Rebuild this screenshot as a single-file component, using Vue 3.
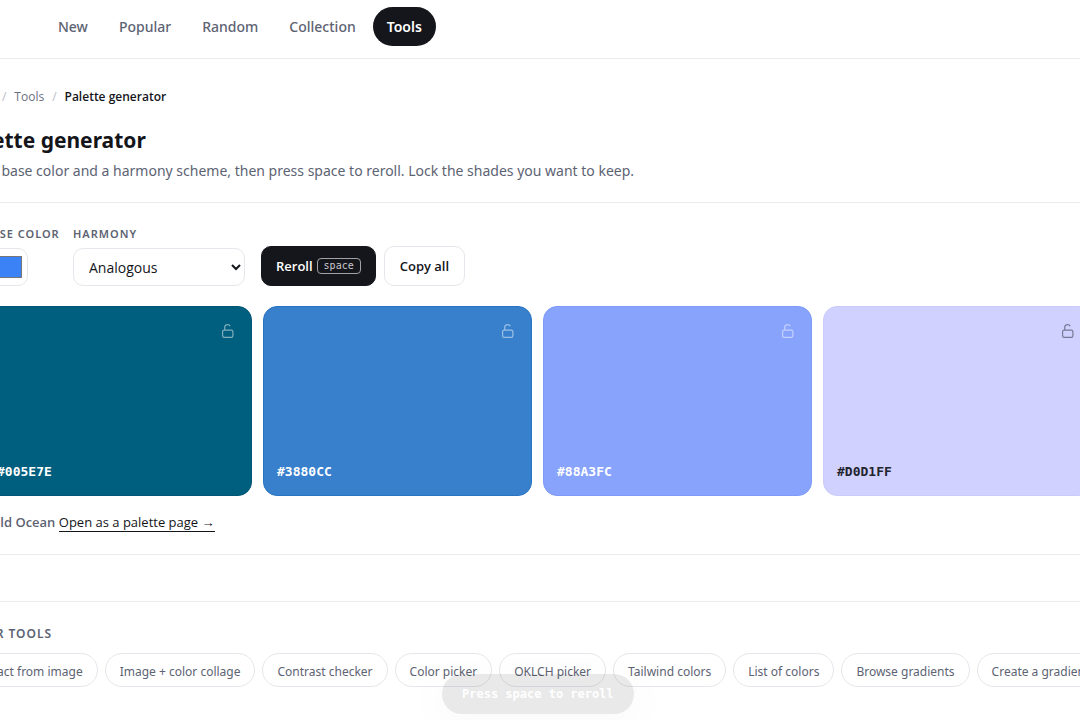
<script setup>
import { ref } from 'vue'

const nav = ['New', 'Popular', 'Random', 'Collection', 'Tools']
const base = ref('#3b82f6')
const harmony = ref('Analogous')
const schemes = ['Analogous', 'Complementary', 'Triadic', 'Monochrome']
const shades = [
  { hex: '#005E7E', edge: '#005675' },
  { hex: '#3880CC', edge: '#2874c4' },
  { hex: '#88A3FC', edge: '#7f9af8' },
  { hex: '#D0D1FF', edge: '#cacbfb', dark: true },
  { hex: '#F3EFFF', edge: '#e9e4fa', dark: true },
]
const tools = [
  'Extract from image', 'Image + color collage', 'Contrast checker', 'Color picker',
  'OKLCH picker', 'Tailwind colors', 'List of colors', 'Browse gradients', 'Create a gradient',
]
</script>

<template>
  <div class="viewport">
    <div class="shell">
      <header class="topbar">
        <nav class="nav" aria-label="Main">
          <a v-for="n in nav" :key="n" href="#" :class="{ active: n === 'Tools' }">{{ n }}</a>
        </nav>
      </header>
      <main>
        <section class="intro">
          <nav class="crumbs" aria-label="Breadcrumb">
            <a href="#">Home</a><i>/</i><a href="#">Tools</a><i>/</i><b>Palette generator</b>
          </nav>
          <h1>Palette generator</h1>
          <p>Pick a base color and a harmony scheme, then press space to reroll. Lock the shades you want to keep.</p>
        </section>
        <section class="generator">
          <div class="controls">
            <div class="field">
              <label for="base">Base color</label>
              <input id="base" v-model="base" type="color" />
            </div>
            <div class="field">
              <label for="harmony">Harmony</label>
              <select id="harmony" v-model="harmony">
                <option v-for="s in schemes" :key="s">{{ s }}</option>
              </select>
            </div>
            <div class="actions">
              <button class="reroll" type="button">Reroll <kbd>space</kbd></button>
              <button type="button">Copy all</button>
            </div>
          </div>
          <div class="shades">
            <article v-for="s in shades" :key="s.hex" class="shade" :class="{ dark: s.dark }" :style="{ background: s.hex, borderColor: s.edge }">
              <button class="lock" type="button" :aria-label="'Lock ' + s.hex">
                <svg viewBox="0 0 14 16" width="14" height="16" fill="none" stroke="currentColor" stroke-width="1.2">
                  <rect x="1.6" y="7.1" width="10.3" height="7.3" rx="1.6" />
                  <path d="M3.7 7V4.5C3.7 2.8 5 1.6 6.6 1.6c1.2 0 2.2.7 2.6 1.7" />
                </svg>
              </button>
              <span class="hex">{{ s.hex }}</span>
            </article>
          </div>
          <p class="name"><b>Emerald Ocean</b> <a href="#">Open as a palette page →</a></p>
        </section>
        <section class="more">
          <h2>Other tools</h2>
          <div class="chips">
            <a v-for="t in tools" :key="t" href="#">{{ t }}</a>
          </div>
        </section>
      </main>
    </div>
    <div class="toast" role="status">Press space to reroll</div>
  </div>
</template>

<style>
body { margin: 0; background: #fff; }
</style>

<style scoped>
.viewport {
  position: relative;
  min-height: 100vh;
  overflow: hidden;
  font-family: "Noto Sans", "Open Sans", sans-serif;
  color: #14151a;
}
.viewport * { box-sizing: border-box; }
.shell { margin: 0 -292px 0 -40px; }
a { color: inherit; text-decoration: none; }
.topbar { display: flex; height: 59px; padding: 7px 0 0 84px; border-bottom: 1px solid #ebebee; }
.nav { display: flex; gap: 3px; height: 39px; }
.nav a { display: flex; align-items: center; padding: 0 14px; border-radius: 20px; font-size: 14px; font-weight: 500; color: #5d6373; }
.nav a.active { background: #15161b; color: #fff; font-weight: 600; }
.intro { height: 144px; padding-top: 28px; border-bottom: 1px solid #ebebee; }
.crumbs { display: flex; gap: 8px; font: 12px/20px "Open Sans", sans-serif; color: #6b7080; }
.crumbs i { font-style: normal; color: #b9bcc6; }
.crumbs b { font-weight: 600; color: #14151a; }
h1 { margin: 17px 0 0; font-size: 21px; line-height: 32px; font-weight: 700; }
.intro p { margin: 4px 0 0; font-size: 14px; line-height: 22px; color: #5d6373; white-space: nowrap; }
.generator { height: 352px; padding: 23px 0 0 23px; border-bottom: 1px solid #ebebee; }
.controls { display: flex; align-items: flex-end; gap: 16px; }
.field { display: flex; flex-direction: column; gap: 7px; width: 74px; }
.field + .field { width: 172px; }
label, h2 { line-height: 15px; font-weight: 600; letter-spacing: 1px; text-transform: uppercase; color: #5d6373; white-space: nowrap; }
label { font-size: 11px; }
h2 { margin: 0; font-size: 12px; }
input { width: 45px; height: 38px; padding: 3px 3px; border: 1px solid #e6e7ec; border-radius: 10px; background: #fff; }
select { height: 38px; padding: 0 0 0 11px; border: 1px solid #e6e7ec; border-radius: 10px; background: #fff; font: 14px "Open Sans", sans-serif; color: #14151a; }
.actions { display: flex; gap: 8px; }
.actions button { display: flex; align-items: center; gap: 4px; height: 40px; padding: 0 15px; border: 1px solid #e6e7ec; border-radius: 10px; background: #fff; font: 600 13px "Open Sans", sans-serif; color: #14151a; }
.actions .reroll { padding: 0 14px; background: #15161b; border-color: #15161b; color: #fff; }
kbd { padding: 0 6px; border: 1px solid #a2a2a5; border-radius: 4px; font: 10px/14px "DejaVu Sans Mono", monospace; color: #c9c9cc; }
.shades { display: grid; grid-template-columns: repeat(5, 1fr); gap: 11px; margin-top: 20px; }
.shade { display: flex; flex-direction: column; justify-content: space-between; height: 190px; padding: 16px 15px 14px 13px; border: 1px solid; border-radius: 14px; color: #fff; }
.shade.dark { color: #22242e; }
.lock { align-self: flex-end; display: flex; padding: 0; margin: 0 1px; border: 0; background: none; color: inherit; opacity: .5; }
.hex { font: 700 13px/18px "DejaVu Sans Mono", monospace; }
.name { margin: 16px 0 0 -23px; font: 13px/20px "Open Sans", sans-serif; color: #5d6373; }
.name b { font-weight: 600; }
.name a { color: #14151a; border-bottom: 1px solid #14151a; }
.more { margin-top: 46px; padding-top: 24px; border-top: 1px solid #ebebee; }
.chips { display: flex; gap: 7px; margin-top: 12px; }
.chips a { display: flex; align-items: center; height: 34px; padding: 2px 14px 0; border: 1px solid #e6e7ec; border-radius: 17px; font-size: 12px; color: #5d6373; white-space: nowrap; }
.toast { position: absolute; top: 674px; left: 442px; padding: 10px 20px; border-radius: 20px; background: #15161b; font: 700 12px/20px "DejaVu Sans Mono", monospace; color: #fff; opacity: .09; box-shadow: 0 8px 24px rgba(0, 0, 0, .2); }
</style>
